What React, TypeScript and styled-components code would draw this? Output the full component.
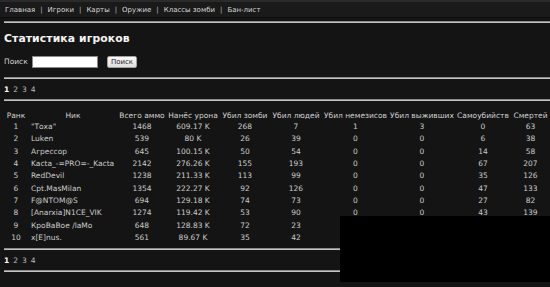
import { Fragment } from 'react';
import styled, { createGlobalStyle } from 'styled-components';

const GlobalStyle = createGlobalStyle`
  html, body {
    margin: 0;
    padding: 0;
    background: #141414;
  }
  body {
    font-family: 'DejaVu Sans', Verdana, sans-serif;
    font-size: 7.5px;
    color: #cfcfcf;
  }
`;

const Page = styled.div`
  position: relative;
  width: 550px;
  height: 287px;
  overflow: hidden;
  background: #141414;
`;

const NavBar = styled.div`
  height: 15px;
  border-top: 2px solid #2b2b2b;
  border-bottom: 1px solid #0e0e0e;
  background: #1a1a1a;
  padding-left: 5px;
  display: flex;
  align-items: center;
  gap: 5px;
  font-size: 7px;
  color: #d8d8d8;
`;

const NavSep = styled.span`
  color: #bdbdbd;
`;

const Rule = styled.div<{ $top: number }>`
  margin: ${({ $top }) => $top}px 0 0 4px;
  height: 1px;
  border-top: 1px solid #8a8a8a;
  background: #c4c4c4;
`;

const Title = styled.h1`
  margin: 8px 0 0 4px;
  height: 15px;
  font-size: 10.8px;
  line-height: 15px;
  font-weight: bold;
  color: #f4f4f4;
  letter-spacing: 0.1px;
`;

const SearchRow = styled.form`
  margin: 9px 0 0 4px;
  height: 13px;
  display: flex;
  align-items: center;
`;

const SearchLabel = styled.span`
  width: 28px;
  color: #d0d0d0;
`;

const SearchInput = styled.div`
  width: 66px;
  height: 12px;
  background: #fff;
  border: 1px solid #888;
  box-sizing: border-box;
`;

const SearchButton = styled.div`
  margin-left: 9px;
  width: 30px;
  height: 12px;
  box-sizing: border-box;
  background: linear-gradient(#fafafa, #dedede);
  border: 1px solid #a0a0a0;
  border-radius: 2px;
  color: #222;
  font-size: 7px;
  display: flex;
  align-items: center;
  justify-content: center;
`;

const Pager = styled.div<{ $top: number }>`
  margin: ${({ $top }) => $top}px 0 0 4px;
  height: 12px;
  display: flex;
  align-items: center;
  gap: 4px;
`;

const PageLink = styled.span<{ $active?: boolean }>`
  color: ${({ $active }) => ($active ? '#ffffff' : '#bcbcbc')};
  font-weight: ${({ $active }) => ($active ? 'bold' : 'normal')};
`;

const Table = styled.table`
  margin: 8px 0 0 4px;
  border-collapse: collapse;
  table-layout: fixed;
  width: 546px;
`;

const HeadCell = styled.th<{ $w: number }>`
  width: ${({ $w }) => $w}px;
  height: 12px;
  padding: 0;
  font-weight: normal;
  color: #d2d2d2;
  text-align: center;
  white-space: nowrap;
`;

const Cell = styled.td<{ $left?: boolean }>`
  height: 12.33px;
  line-height: 12.33px;
  padding: 0;
  text-align: ${({ $left }) => ($left ? 'left' : 'center')};
  padding-left: ${({ $left }) => ($left ? '3px' : '0')};
  white-space: nowrap;
  color: #cccccc;
`;

const Blackout = styled.div`
  position: absolute;
  left: 340px;
  top: 216px;
  width: 210px;
  height: 66px;
  background: #000;
`;

const columns: [string, number][] = [
  ['Ранк', 24],
  ['Ник', 90],
  ['Всего аммо', 48],
  ['Нанёс урона', 54],
  ['Убил зомби', 50],
  ['Убил людей', 52],
  ['Убил немезисов', 67],
  ['Убил выживших', 66],
  ['Самоубийств', 56],
  ['Смертей', 39],
];

type Row = [string, string, string, string, string, string, string, string, string];

const rows: Row[] = [
  ['"Тоха"', '1468', '609.17 K', '268', '7', '1', '3', '0', '63'],
  ['Luken', '539', '80 K', '26', '39', '0', '0', '6', '38'],
  ['Агрессор', '645', '100.15 K', '50', '54', '0', '0', '14', '58'],
  ['Kacta_-=PRO=-_Kacta', '2142', '276.26 K', '155', '193', '0', '0', '67', '207'],
  ['RedDevil', '1238', '211.33 K', '113', '99', '0', '0', '35', '126'],
  ['Cpt.MasMilan', '1354', '222.27 K', '92', '126', '0', '0', '47', '133'],
  ['F@NTOM@S', '694', '129.18 K', '74', '73', '0', '0', '27', '82'],
  ['[Anarxia]N1CE_VIK', '1274', '119.42 K', '53', '90', '0', '0', '43', '139'],
  ['КроВаВое /laMo', '648', '128.83 K', '72', '23', '0', '0', '11', '96'],
  ['x[E]nus.', '561', '89.67 K', '35', '42', '0', '0', '9', '71'],
];

const Pagination = ({ top }: { top: number }) => (
  <Pager $top={top}>
    <PageLink $active>1</PageLink>
    <PageLink>2</PageLink>
    <PageLink>3</PageLink>
    <PageLink>4</PageLink>
  </Pager>
);

const navItems = ['Главная', 'Игроки', 'Карты', 'Оружие', 'Классы зомби', 'Бан-лист'];

export default function App() {
  return (
    <Page>
      <GlobalStyle />
      <NavBar>
        {navItems.map((item, i) => (
          <Fragment key={item}>
            {i > 0 && <NavSep>|</NavSep>}
            <span>{item}</span>
          </Fragment>
        ))}
      </NavBar>
      <Rule $top={3} />
      <Title>Статистика игроков</Title>
      <SearchRow onSubmit={(e) => e.preventDefault()}>
        <SearchLabel>Поиск</SearchLabel>
        <SearchInput />
        <SearchButton>Поиск</SearchButton>
      </SearchRow>
      <Rule $top={9} />
      <Pagination top={4} />
      <Rule $top={4} />
      <Table>
        <thead>
          <tr>
            {columns.map(([name, w]) => (
              <HeadCell key={name} $w={w}>
                {name}
              </HeadCell>
            ))}
          </tr>
        </thead>
        <tbody>
          {rows.map((row, i) => (
            <tr key={row[0]}>
              <Cell>{i + 1}</Cell>
              <Cell $left>{row[0]}</Cell>
              {row.slice(1).map((v, j) => (
                <Cell key={j}>{v}</Cell>
              ))}
            </tr>
          ))}
        </tbody>
      </Table>
      <Rule $top={4} />
      <Pagination top={4} />
      <Rule $top={4} />
      <Blackout />
    </Page>
  );
}
